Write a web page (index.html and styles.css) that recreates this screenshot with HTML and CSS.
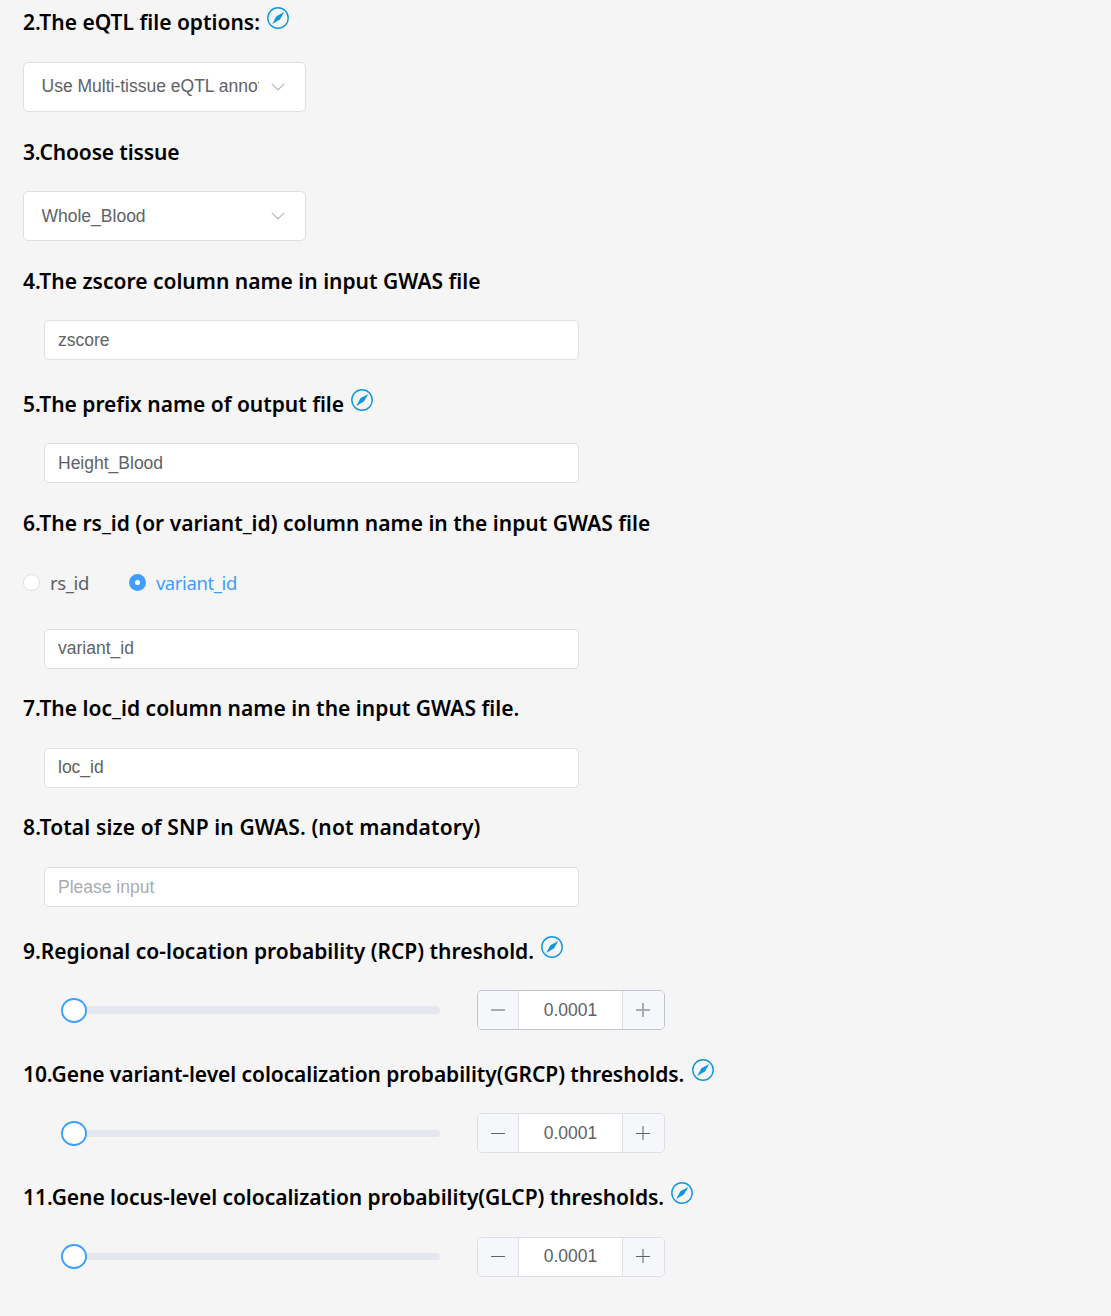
FILE: index.html
```html
<!DOCTYPE html>
<html lang="en">
<head>
<meta charset="utf-8">
<title>Colocalization options</title>
<link rel="stylesheet" href="styles.css">
</head>
<body>
<svg width="0" height="0" class="defs">
  <symbol id="compass" viewBox="0 0 22 22"><circle cx="11" cy="11" r="10.2" fill="none" stroke="#1296db" stroke-width="1.4"/><path d="M17.3 5 12.9 12.4 5.2 17.1 9.4 9.2Z" fill="#1296db"/></symbol>
  <symbol id="chevron" viewBox="0 0 14 8"><path d="M.8.8 7 7 13.2.8" fill="none" stroke="#b4b7be" stroke-width="1.2"/></symbol>
</svg>
<main class="form">
  <section>
    <h3 class="title tall"><span class="t2">2.The eQTL file options:</span><svg class="hint"><use href="#compass"/></svg></h3>
    <div class="select"><span class="value raised">Use Multi-tissue eQTL annotation</span><svg class="arrow"><use href="#chevron"/></svg></div>
  </section>
  <section>
    <h3 class="title"><span class="t3">3.Choose tissue</span></h3>
    <div class="select"><span class="value">Whole_Blood</span><svg class="arrow"><use href="#chevron"/></svg></div>
  </section>
  <section>
    <h3 class="title"><span class="t4">4.The zscore column name in input GWAS file</span></h3>
    <div class="input low">zscore</div>
  </section>
  <section>
    <h3 class="title"><span class="t5">5.The prefix name of output file</span><svg class="hint"><use href="#compass"/></svg></h3>
    <div class="input low">Height_Blood</div>
  </section>
  <section>
    <h3 class="title tall"><span class="t6">6.The rs_id (or variant_id) column name in the input GWAS file</span></h3>
    <div class="radios">
      <label class="radio"><i class="dot"></i>rs_id</label>
      <label class="radio checked"><i class="dot"></i>variant_id</label>
    </div>
    <div class="input">variant_id</div>
  </section>
  <section>
    <h3 class="title tall"><span class="t7">7.The loc_id column name in the input GWAS file.</span></h3>
    <div class="input">loc_id</div>
  </section>
  <section>
    <h3 class="title tall"><span class="t8">8.Total size of SNP in GWAS. (not mandatory)</span></h3>
    <div class="input low placeholder">Please input</div>
  </section>
  <section>
    <h3 class="title"><span class="t9">9.Regional co-location probability (RCP) threshold.</span><svg class="hint"><use href="#compass"/></svg></h3>
    <div class="range">
      <div class="slider"><i class="knob"></i><i class="track"></i></div>
      <div class="number low hover"><span class="step"><i class="minus"></i></span><span class="amount">0.0001</span><span class="step"><i class="minus plus"></i></span></div>
    </div>
  </section>
  <section>
    <h3 class="title"><span class="t10">10.Gene variant-level colocalization probability(GRCP) thresholds.</span><svg class="hint"><use href="#compass"/></svg></h3>
    <div class="range">
      <div class="slider thin"><i class="knob"></i><i class="track"></i></div>
      <div class="number low"><span class="step"><i class="minus"></i></span><span class="amount">0.0001</span><span class="step"><i class="minus plus"></i></span></div>
    </div>
  </section>
  <section>
    <h3 class="title tall"><span class="t11">11.Gene locus-level colocalization probability(GLCP) thresholds.</span><svg class="hint"><use href="#compass"/></svg></h3>
    <div class="range">
      <div class="slider thin last"><i class="knob"></i><i class="track"></i></div>
      <div class="number last"><span class="step"><i class="minus"></i></span><span class="amount">0.0001</span><span class="step"><i class="minus plus"></i></span></div>
    </div>
  </section>
</main>
</body>
</html>
```
FILE: styles.css
```css
* { box-sizing: border-box; }
body { margin: 0; height: 1316px; overflow: hidden; background: #f5f5f5; font-family: "Liberation Sans", Arial, sans-serif; font-size: 17.5px; color: #606266; }
.defs { display: block; height: 0; }
.form { display: grid; grid-template-rows: 130px 129px 123px 119px 185px 119px 124px 123px 123px 123px; padding: 2px 0 0 23px; }
.title { display: flex; height: 40px; margin: 0 0 19px; font: 600 21px/40px "Noto Sans", "Open Sans", sans-serif; color: #000; white-space: nowrap; }
.title.tall { margin-bottom: 20px; }
.t3 { letter-spacing: -0.14px; }
.t5 { letter-spacing: -0.02px; }
.t7 { letter-spacing: 0.02px; }
.t8 { letter-spacing: 0.115px; }
.t10 { letter-spacing: -0.075px; }
.t11 { letter-spacing: -0.045px; }
.hint { width: 22px; height: 22px; margin: 4.6px 0 0 7.4px; }
.select { display: flex; align-items: center; width: 283px; height: 50px; padding: 0 20px 0 17.5px; background: #fff; border: 1px solid #dcdfe6; border-radius: 5px; }
.value { width: 217px; overflow: hidden; white-space: nowrap; line-height: 48px; padding-bottom: 1px; }
.raised { line-height: 46px; padding-bottom: 3px; }
.arrow { width: 14px; height: 8px; margin: 0 0 0 12px; }
.input { width: 535px; height: 40px; margin-left: 21px; padding-left: 13px; line-height: 37px; background: #fff; border: 1px solid #dcdfe6; border-radius: 5px; }
.input.low { line-height: 39px; }
.placeholder { color: #a8abb2; }
.radios { display: flex; gap: 40px; height: 40px; margin-bottom: 26px; font: 18.5px/40px "Noto Sans", "Open Sans", sans-serif; letter-spacing: -0.4px; }
.radio { display: flex; align-items: center; gap: 10px; }
.dot { width: 17px; height: 17px; margin-top: -1px; border: 1px solid #dcdfe6; border-radius: 50%; background: #fff; }
.checked { color: #409eff; }
.checked .dot { border: 6px solid #409eff; }
.range { display: flex; align-items: center; height: 40px; }
.slider { display: flex; align-items: center; width: 379px; margin: 0 37px 0 38px; }
.knob { z-index: 1; width: 25.5px; height: 25px; margin: 1px 0 0; border: 2px solid #409eff; border-radius: 50%; background: #fff; }
.track { flex: 1; height: 8px; margin-left: -2px; background: #e4e7ed; border-radius: 0 4px 4px 0; }
.thin .track { height: 7px; margin-top: 1px; }
.slider.last { margin-top: -2px; }
.number { display: flex; width: 188px; height: 40px; overflow: hidden; border: 1px solid #dcdfe6; border-radius: 5px; background: #fff; }
.hover { border-color: #c0c4cc; }
.step { display: flex; align-items: center; justify-content: center; width: 41px; background: #f5f7fa; border-right: 1px solid #dcdfe6; }
.step:last-child { width: 42px; padding-right: 1px; border-right: 0; border-left: 1px solid #dcdfe6; }
.amount { flex: 1; text-align: center; line-height: 37px; }
.low .amount { line-height: 39px; }
.minus { width: 14px; height: 14px; background: linear-gradient(#606266, #606266) 0 7px / 14px 1px no-repeat; }
.last .minus { margin-top: -2px; }
.plus { background: linear-gradient(#606266, #606266) 0 7px / 14px 1px no-repeat, linear-gradient(#a8abb2, #a8abb2) 6px 0 / 2px 14px no-repeat; }
.hover .minus { background: linear-gradient(#a8abb2, #a8abb2) 0 6px / 14px 2px no-repeat; }
.hover .plus { background: linear-gradient(#a8abb2, #a8abb2) 0 6px / 14px 2px no-repeat, linear-gradient(#a8abb2, #a8abb2) 6px 0 / 2px 14px no-repeat; }
```
